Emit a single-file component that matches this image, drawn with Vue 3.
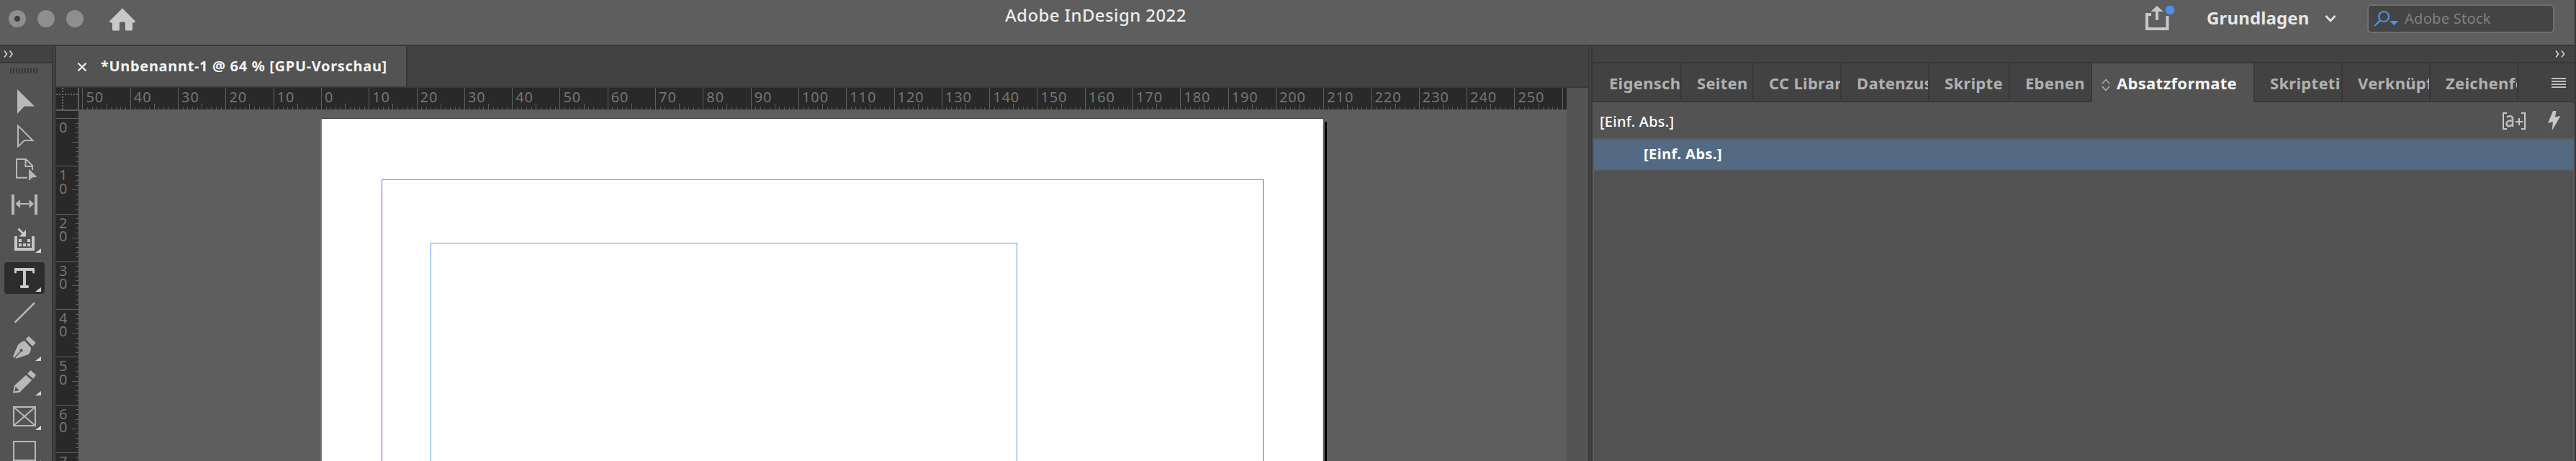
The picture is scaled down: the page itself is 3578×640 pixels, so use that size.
<script setup>
const STEP = 66.3
const ZERO_X = 446.4 - 110
const ZERO_Y = 164.4 - 154

function ticks(origin, length) {
  const out = []
  for (let n = -60; n <= 270; n++) {
    const pos = Math.floor(origin + (n * STEP) / 10)
    if (pos < 0 || pos >= length) continue
    out.push({ pos, kind: n % 10 === 0 ? 'major' : n % 5 === 0 ? 'half' : 'minor' })
  }
  return out
}

const hLen = { major: 30, half: 8, minor: 3 }
const vLen = { major: 31, half: 9, minor: 4 }
const hTicks = ticks(ZERO_X, 2066).filter((t) => t.pos >= 4)
const vTicks = ticks(ZERO_Y, 486).filter((t) => t.pos >= 4)
const hLabels = Array.from({ length: 31 }, (_, i) => Math.abs(i * 10 - 50))
const vLabels = Array.from({ length: 8 }, (_, i) => String(i * 10).split(''))

const tabs = [
  { name: 'Eigensch', w: 124, first: true },
  { name: 'Seiten', w: 100 },
  { name: 'CC Librar', w: 122 },
  { name: 'Datenzus', w: 122 },
  { name: 'Skripte', w: 112 },
  { name: 'Ebenen', w: 114 },
  { name: 'Absatzformate', w: 226, active: true },
  { name: 'Skriptetik', w: 122 },
  { name: 'Verknüpf', w: 122 },
  { name: 'Zeichenfo', w: 122 },
]
</script>

<template>
  <div class="app">
    <header class="titlebar">
      <div class="lights"><i class="light dot"></i><i class="light"></i><i class="light"></i></div>
      <svg class="home" width="36" height="32" viewBox="0 0 36 32">
        <path d="M18 0.5 L35.5 18 Q36.5 20 34 20.5 H32 V30 Q32 31.5 30.5 31.5 H23.5 Q22 31.5 22 30 V21 Q22 19.5 20.5 19.5 H15.5 Q14 19.5 14 21 V30 Q14 31.5 12.5 31.5 H5.5 Q4 31.5 4 30 V20.5 H2 Q-0.5 20 0.5 18 Z" fill="#c8c8c8" />
      </svg>
      <h1>Adobe InDesign 2022</h1>
      <div class="right-tools">
        <svg class="share" width="42" height="36" viewBox="0 0 42 36">
          <path d="M8 12 H2 V32 H30.5 V14" fill="none" stroke="#c8c8c8" stroke-width="4" />
          <path d="M16 20 V6" stroke="#c8c8c8" stroke-width="4" />
          <path d="M16 0 L24.5 8 H7.5 Z" fill="#c8c8c8" />
          <circle cx="34" cy="6" r="8.5" fill="#5e5e5e" />
          <circle cx="34" cy="6" r="6.2" fill="#4b8fec" />
        </svg>
        <span class="workspace">Grundlagen</span>
        <svg class="chev" width="16" height="12" viewBox="0 0 16 12"><path d="M1.5 2 L8 9 L14.5 2" fill="none" stroke="#e4e4e4" stroke-width="2.6" /></svg>
        <div class="search">
          <svg width="36" height="32" viewBox="0 0 36 32">
            <circle cx="15" cy="12" r="7" fill="none" stroke="#4b8fec" stroke-width="2.2" />
            <path d="M10.5 17 L2 25" stroke="#4b8fec" stroke-width="2.4" />
            <path d="M23 18 H35.5 L29.2 24.3 Z" fill="#4b8fec" />
          </svg>
          <span>Adobe Stock</span>
        </div>
      </div>
    </header>

    <main class="body">
      <aside class="tools">
        <div class="tools-head">
          <svg width="14" height="10" viewBox="0 0 14 10"><path d="M1 0.5 L4.5 5 L1 9.5 M8.5 0.5 L12 5 L8.5 9.5" fill="none" stroke="#d0d0d0" stroke-width="1.7" /></svg>
        </div>
        <div class="grip"><i v-for="n in 10" :key="n"></i></div>
        <svg class="tool" viewBox="0 -6 72 48"><path d="M24 2 L48 25.6 L33.7 25.8 L24 36 Z" /></svg>
        <svg class="tool" viewBox="0 -6 72 48"><path class="ln" d="M25 4.6 L45.5 25 L34 25 L25 33.5 Z" /></svg>
        <svg class="tool" viewBox="0 -6 72 48">
          <path class="ln" d="M38 28.8 H23 V3 H36 L45 12 V18 M35.5 3 V13 H45" />
          <path d="M40 16.5 L51.5 27.5 L44.7 28.5 L40 33 Z" />
        </svg>
        <svg class="tool" viewBox="0 -6 72 48">
          <path d="M16 4 H20 V32 H16 Z M48 4 H52 V32 H48 Z M21.5 17 L28 11 V23 Z M47 17 L40.5 11 V23 Z M27 16 H41 V18 H27 Z" />
        </svg>
        <svg class="tool bright" viewBox="0 -6 72 48">
          <path d="M20 14 H24 V30 H44 V14 H48 V34 H20 Z M26 18 H30 V22 H26 Z M38 18 H42 V22 H38 Z M26 24 H30 V28 H26 Z M32 24 H36 V28 H32 Z M38 24 H42 V28 H38 Z M36 5 V14.5 H26.5 Z" />
          <path class="ln" d="M25.5 3.5 L33 11" />
          <path class="more" d="M57 31 V37 H49 Z" />
        </svg>
        <div class="rule"></div>
        <svg class="tool bright" viewBox="0 0 72 48">
          <rect class="sel" x="6" y="2" width="56" height="44" rx="4" />
          <path d="M21 10 H47 Q48 10 48 11 V16.5 Q48 17.5 46.5 17.5 Q45 17.5 45 16 V14 H36 V34 H39 Q40 34 40 36 Q40 38 39 38 H29 Q28 38 28 36 Q28 34 29 34 H32 V14 H23 V16 Q23 17.5 21.5 17.5 Q20 17.5 20 16.5 V11 Q20 10 21 10 Z" />
          <path class="more" d="M57 37 V43 H49 Z" />
        </svg>
        <svg class="tool" viewBox="0 0 72 48"><path class="ln thick" d="M20.7 37.7 L48 10.3" /></svg>
        <svg class="tool" viewBox="0 0 72 48">
          <path d="M39.7 8.7 L49.7 17.7 L45.3 22.7 L35.7 13 Z M34 15 L43 24.7 Q43 31 39.5 34 Q33 36.5 22 39.7 L20.5 38.5 Q19 39.5 18 37.3 Q21.5 28 25 20.7 Q28 17 34 15 Z" />
          <path class="cut" d="M19.5 39.5 L28.5 30" />
          <circle class="hole" cx="29.5" cy="28.5" r="2.1" />
          <path class="more" d="M57 37 V43 H49 Z" />
        </svg>
        <svg class="tool" viewBox="0 0 72 48">
          <path d="M42.7 8 L50 14.7 L46 19.7 L38 12.7 Z M36 14.7 L44.3 21.7 L27.3 38.7 L18 39.7 L20 29.3 Z" />
          <path class="hole" d="M21.5 31 L26.8 36 L20.6 37.3 Z" />
          <path class="more" d="M57 37 V43 H49 Z" />
        </svg>
        <svg class="tool" viewBox="0 0 72 48">
          <path class="ln" d="M19 11 H49 V37 H19 Z M19 11 L49 37 M49 11 L19 37" />
          <path class="more" d="M57 37 V43 H49 Z" />
        </svg>
        <svg class="tool" viewBox="0 0 72 48">
          <path class="ln" d="M19 11 H49 V37 H19 Z" />
          <path class="more" d="M57 37 V43 H49 Z" />
        </svg>
      </aside>
      <div class="gutter"></div>

      <section class="document">
        <div class="doc-tabs">
          <div class="doc-tab">
            <svg width="14" height="12" viewBox="0 0 14 12"><path d="M1.5 0.7 L12.5 11.3 M12.5 0.7 L1.5 11.3" stroke="#f0f0f0" stroke-width="2.2" /></svg>
            <span>*Unbenannt-1 @ 64 % [GPU-Vorschau]</span>
          </div>
        </div>
        <div class="doc-body">
          <div class="view">
            <div class="h-row">
              <svg class="origin" width="32" height="32" viewBox="0 0 32 32">
                <path d="M0 9 H30 M9 0 V30" stroke="#6a6a6a" stroke-width="2" stroke-dasharray="2 2" />
                <path d="M0 31 H32 M31 0 V32" stroke="#5e5e5e" stroke-width="2" />
              </svg>
              <div class="h-ruler">
                <svg class="ticks" width="2066" height="30">
                  <rect v-for="t in hTicks" :key="t.pos" :x="t.pos" :y="30 - hLen[t.kind]" width="1" :height="hLen[t.kind]" />
                </svg>
                <span v-for="(l, i) in hLabels" :key="i">{{ l }}</span>
              </div>
            </div>
            <div class="v-row">
              <div class="v-ruler">
                <svg class="ticks" width="31" height="486">
                  <rect v-for="t in vTicks" :key="t.pos" :x="31 - vLen[t.kind]" :y="t.pos" :width="vLen[t.kind]" height="1" />
                </svg>
                <div v-for="(d, i) in vLabels" :key="i" class="v-label"><span v-for="(c, j) in d" :key="j">{{ c }}</span></div>
              </div>
              <div class="pasteboard">
                <div class="shadow"></div>
                <div class="page"></div>
                <div class="margins"></div>
                <div class="frame"></div>
              </div>
            </div>
          </div>
          <div class="scroll"></div>
        </div>
      </section>
      <div class="gutter"></div>

      <aside class="panel">
        <div class="panel-head">
          <svg width="14" height="10" viewBox="0 0 14 10"><path d="M1 0.5 L4.5 5 L1 9.5 M9 0.5 L12.5 5 L9 9.5" fill="none" stroke="#d0d0d0" stroke-width="1.7" /></svg>
        </div>
        <nav class="tabs">
          <div v-for="t in tabs" :key="t.name" class="tab" :class="{ active: t.active, first: t.first }" :style="{ width: t.w + 'px' }">
            <svg v-if="t.active" width="12" height="18" viewBox="0 0 12 18"><path d="M1 7 L6 1.5 L11 7 M1 11 L6 16.5 L11 11" fill="none" stroke="#b0b0b0" stroke-width="1.5" /></svg>
            <span>{{ t.name }}</span>
          </div>
          <div class="menu"><i></i><i></i><i></i><i></i></div>
        </nav>
        <div class="current">
          <span>[Einf. Abs.]</span>
          <svg class="override" width="32" height="24" viewBox="0 0 32 24">
            <path d="M6 1 H1 V23 H6 M26 1 H31 V23 H26 M18 13 H28 M23 8 V18" fill="none" stroke="#c8c8c8" stroke-width="2" />
            <path d="M6 6.5 Q14 3 14 9 V20 M14 11.5 Q5 11 5.5 16.5 Q7.5 21.5 13.5 17" fill="none" stroke="#bdbdbd" stroke-width="2.6" />
          </svg>
          <svg class="bolt" width="20" height="28" viewBox="0 0 20 28"><path d="M8 0 H12.5 L11 8.5 L18.5 7 L6.5 27.5 L8 15 L1 17 Z" fill="#c8c8c8" /></svg>
        </div>
        <div class="list">
          <div class="item">[Einf. Abs.]</div>
        </div>
      </aside>
    </main>
  </div>
</template>

<style>
body { margin: 0; background: #535353; overflow: hidden; }
</style>

<style scoped>
* { box-sizing: border-box; }
.app {
  width: 3578px; height: 640px; overflow: hidden; display: flex; flex-direction: column;
  border-right: 2px solid #383838; background: #535353;
  font-family: "Noto Sans", "Open Sans", sans-serif; font-size: 20px; color: #fff; white-space: nowrap;
}
svg { display: block; flex: none; }
.titlebar { flex: none; height: 64px; background: #5e5e5e; border-bottom: 2px solid #383838; display: flex; align-items: flex-start; }
.lights { display: flex; gap: 16px; padding: 14px 0 0 12px; width: 152px; flex: none; }
.light { width: 24px; height: 24px; border-radius: 50%; background: #8e8e8e; }
.dot { background: radial-gradient(circle, #3e3e3e 3.7px, #8e8e8e 4.5px); }
.home { margin-top: 11px; }
h1 { margin: 5px 0 0 1208px; width: 260px; font-size: 24px; line-height: 32px; font-weight: 500; letter-spacing: 0.4px; color: #ececec; }
.right-tools { margin-left: auto; display: flex; width: 596px; }
.share { margin-top: 8px; }
.workspace { margin: 9px 0 0 43px; width: 165px; font-size: 24px; line-height: 32px; font-weight: 700; letter-spacing: 0.15px; color: #e6e6e6; }
.chev { margin: 20px 0 0 -1px; }
.search { margin: 6px 0 0 43px; width: 260px; height: 40px; border: 2px solid #6f6f6f; border-radius: 6px; background: #444; display: flex; align-items: center; padding-left: 6px; color: #808080; letter-spacing: 0.3px; }
.search svg { margin-top: 2px; }
.search span { margin: -2px 0 0 8px; }

.body { flex: 1; display: flex; min-height: 0; }
.gutter { width: 6px; flex: none; background: #444; border: solid #383838; border-width: 0 2px; }
.tools { width: 72px; flex: none; background: #535353; }
.tools-head { height: 24px; background: #424242; border-bottom: 2px solid #383838; padding: 6px 0 0 5px; }
.grip { height: 28px; padding: 6px 0 0 14px; display: flex; gap: 2px; }
.grip i { width: 2px; height: 8px; background: #383838; }
.tool { width: 72px; height: 48px; fill: #b8b8b8; }
.bright { fill: #c8c8c8; }
.tool .ln { fill: none; stroke: #b8b8b8; stroke-width: 2; }
.bright .ln { stroke: #c8c8c8; stroke-width: 3; }
.tool .thick { stroke-width: 2.6; }
.tool .more { fill: #d4d4d4; }
.tool .sel { fill: #2d2d2d; }
.tool .cut { fill: none; stroke: #535353; stroke-width: 1.5; }
.tool .hole { fill: #535353; }
.rule { height: 6px; width: 70px; border-top: 2px solid #535353; background: linear-gradient(#4b4b4b 1px, #535353 1px); }

.document { width: 2128px; flex: none; display: flex; flex-direction: column; }
.doc-tabs { height: 58px; flex: none; background: #424242; border-bottom: 2px solid #383838; }
.doc-tab { width: 488px; height: 56px; background: #535353; border-right: 2px solid #383838; display: flex; padding-left: 29px; font-weight: 700; letter-spacing: 0.68px; color: #f4f4f4; }
.doc-tab svg { margin-top: 23px; }
.doc-tab span { margin: 14px 0 0 19px; line-height: 28px; }
.doc-body { flex: 1; display: flex; min-height: 0; }
.scroll { flex: 1; background: #535353; }
.view { width: 2098px; display: flex; flex-direction: column; background: #5e5e5e; }
.h-row { display: flex; height: 32px; flex: none; }
.origin { background: #292929; }
.h-ruler { position: relative; width: 2066px; height: 30px; background: #292929; display: flex; overflow: hidden; padding-left: 9.5px; color: #757575; letter-spacing: 0.9px; line-height: 26px; }
.h-ruler span { flex: 0 0 66.3px; }
.ticks { position: absolute; left: 0; top: 0; fill: #606060; }
.v-row { flex: 1; display: flex; min-height: 0; }
.v-ruler { position: relative; width: 31px; background: #292929; overflow: hidden; padding-top: 14px; color: #757575; }
.v-label { height: 66.3px; padding-left: 4px; line-height: 18.3px; display: flex; flex-direction: column; }
.pasteboard { flex: 1; position: relative; overflow: hidden; }
.pasteboard > div { position: absolute; }
.shadow { left: 1731px; top: 15px; width: 3px; height: 500px; background: #000; }
.page { left: 336px; top: 10px; width: 1394px; height: 500px; background: #fff; border: 1px solid #444; border-left: 2px solid #777; }
.margins { left: 421px; top: 95px; width: 1225px; height: 500px; border: 1px solid #9a35f5; border-top-color: #ea58ec; }
.frame { left: 489px; top: 183px; width: 815px; height: 500px; border: 1px solid #4f9bf8; }

.panel { flex: 1; min-width: 0; display: flex; flex-direction: column; }
.panel-head { height: 24px; background: #424242; border-bottom: 2px solid #383838; display: flex; justify-content: flex-end; padding: 6px 13px 0 0; }
.tabs { height: 54px; display: flex; background: #424242; }
.tab { flex: none; overflow: hidden; border: solid #383838; border-width: 0 2px 2px 0; padding: 11px 0 0 21px; font-size: 22px; line-height: 32px; font-weight: 700; letter-spacing: 0.3px; color: #b0b0b0; display: flex; }
.tab.first { padding-left: 23px; }
.tab.active { background: #535353; color: #f4f4f4; border-bottom-color: #535353; padding-left: 13px; }
.tab.active svg { margin: 10px 9px 0 0; }
.menu { flex: 1; border-bottom: 2px solid #383838; padding: 20px 12px 0 46px; display: flex; flex-direction: column; gap: 2px; }
.menu i { height: 2px; background: #bdbdbd; }
.current { height: 50px; display: flex; padding-left: 10px; }
.current span { margin-top: 13px; line-height: 28px; width: 1254px; font-weight: 500; letter-spacing: 0.25px; }
.override { margin-top: 14px; }
.bolt { margin: 12px 0 0 30px; }
.list { flex: 1; border: 2px solid #5e5e5e; border-bottom: 0; background: #525252; }
.item { height: 43px; background: #546a82; border-bottom: 2px solid #5e5e5e; padding-left: 69px; line-height: 39px; font-weight: 700; letter-spacing: 0.45px; }
</style>
